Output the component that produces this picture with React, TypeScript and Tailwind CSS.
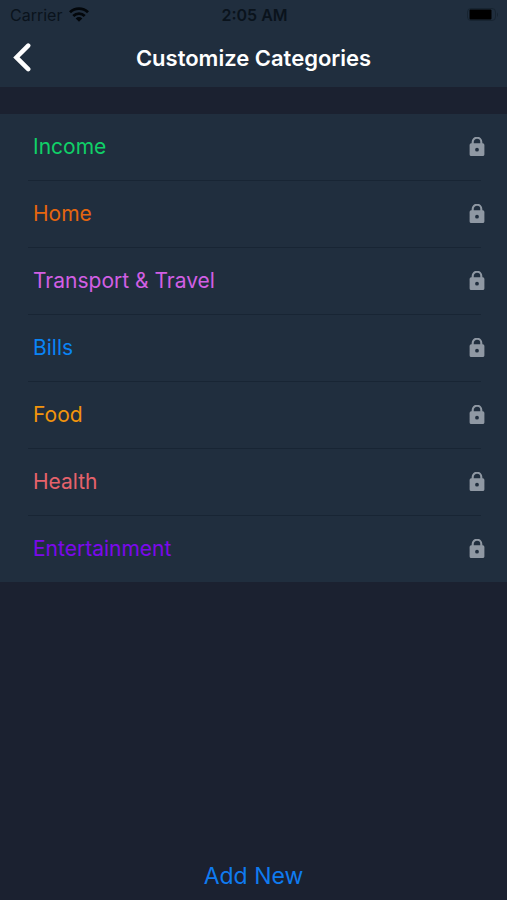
interface Category {
  name: string;
  color: string;
}

const categories: Category[] = [
  { name: 'Income', color: 'text-[#10d068]' },
  { name: 'Home', color: 'text-[#e5660f]' },
  { name: 'Transport & Travel', color: 'text-[#d25fe4]' },
  { name: 'Bills', color: 'text-[#0a84f5]' },
  { name: 'Food', color: 'text-[#f2940c]' },
  { name: 'Health', color: 'text-[#e6626b]' },
  { name: 'Entertainment', color: 'text-[#7c08ec]' },
];

function WifiIcon() {
  return (
    <svg
      viewBox="0 0 20 15"
      className="h-[15px] w-5"
      aria-hidden="true"
    >
      <g
        fill="none"
        stroke="#03070b"
        strokeWidth="2.8"
      >
        <path d="M1 5.3a12.8 12.8 0 0 1 18 0" />
        <path d="M4.3 8.9a8.1 8.1 0 0 1 11.4 0" />
      </g>
      <path
        d="M6.7 11.4a4.7 4.7 0 0 1 6.6 0L10 14.7z"
        fill="#03070b"
      />
    </svg>
  );
}

function BatteryIcon() {
  return (
    <svg
      viewBox="0 0 32 14"
      className="h-[14px] w-8"
      aria-hidden="true"
    >
      <rect
        x="0.5"
        y="0.5"
        width="28"
        height="12"
        rx="3.5"
        fill="none"
        stroke="#172431"
      />
      <rect
        x="2.5"
        y="1.5"
        width="22"
        height="10"
        rx="1"
        fill="#000"
      />
      <path
        d="M30 4.5q2 2 0 4.5z"
        fill="#172431"
      />
    </svg>
  );
}

function LockIcon() {
  return (
    <svg
      viewBox="0 0 16 20"
      className="h-5 w-4"
      role="img"
      aria-label="Locked"
    >
      <path
        d="M3.7 7.5V4.9a4.3 4.2 0 0 1 8.6 0V7.5"
        fill="none"
        stroke="#8f98a3"
        strokeWidth="2.1"
      />
      <path
        fillRule="evenodd"
        d="M2.2 6.3h11.6a1.6 1.6 0 0 1 1.6 1.6v9.6a1.6 1.6 0 0 1-1.6 1.6H2.2a1.6 1.6 0 0 1-1.6-1.6V7.9A1.6 1.6 0 0 1 2.2 6.3zM8 10.8a1.9 1.9 0 1 0 0 3.8 1.9 1.9 0 0 0 0-3.8z"
        fill="#8f98a3"
      />
    </svg>
  );
}

function StatusBar() {
  return (
    <div className="grid grid-cols-3 items-center h-[29px] pl-[10px] pr-2 text-base text-[#0a131c]">
      <div className="flex items-center gap-[7px]">
        <span>Carrier</span>
        <WifiIcon />
      </div>
      <span className="text-center font-semibold">2:05 AM</span>
      <div className="flex justify-end">
        <BatteryIcon />
      </div>
    </div>
  );
}

function App() {
  return (
    <div className="min-h-screen flex flex-col bg-[#1b2130] font-['Inter',sans-serif]">
      <header className="bg-[#202e3e]">
        <StatusBar />
        <div className="grid grid-cols-[48px_1fr_48px] items-center h-[58px]">
          <button
            type="button"
            aria-label="Back"
            className="flex pl-3"
          >
            <svg
              viewBox="0 0 20 30"
              className="h-[30px] w-5"
              aria-hidden="true"
            >
              <path
                d="M16.2 2.6L4.4 14.4l11.8 11.8"
                fill="none"
                stroke="#fff"
                strokeWidth="4.5"
                strokeLinecap="round"
                strokeLinejoin="miter"
              />
            </svg>
          </button>
          <h1 className="text-center text-[22px] font-semibold text-white">Customize Categories</h1>
        </div>
      </header>

      <main className="flex-1 flex flex-col justify-between pt-[27px]">
        <ul className="bg-[#202e3e]">
          {categories.map((category) => (
            <li
              key={category.name}
              className="group"
            >
              <div className="flex items-center justify-between h-[66px] pl-[33px] pr-[22px]">
                <span className={`text-[21px] ${category.color}`}>{category.name}</span>
                <LockIcon />
              </div>
              <div className="h-px ml-7 mr-[26px] bg-[#182534] group-last:hidden" />
            </li>
          ))}
        </ul>

        <button
          type="button"
          className="self-center pb-[7px] text-[23px] text-[#0f7bf0]"
        >
          Add New
        </button>
      </main>
    </div>
  );
}

export default App;
